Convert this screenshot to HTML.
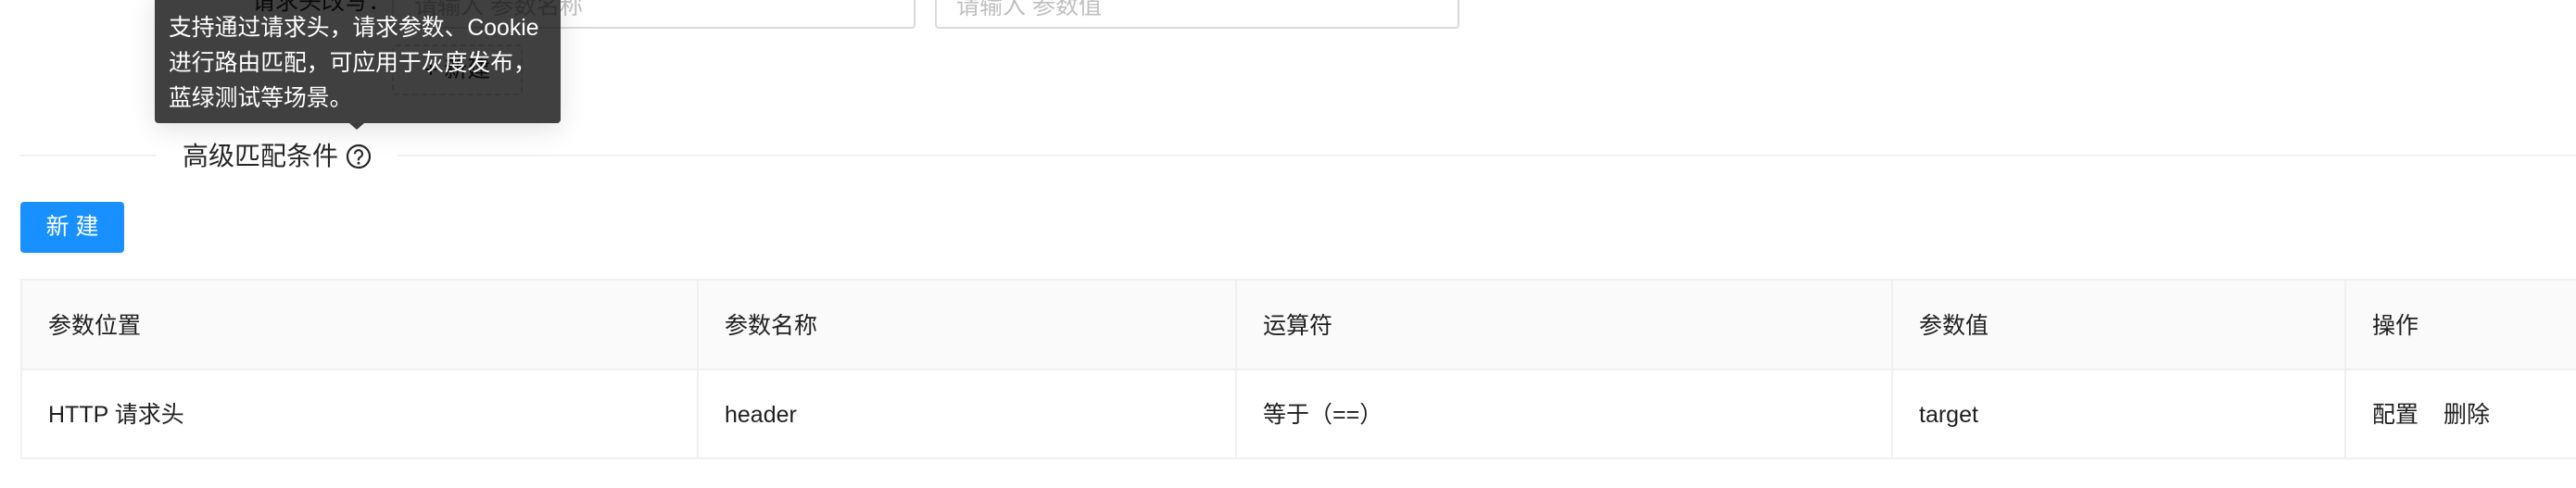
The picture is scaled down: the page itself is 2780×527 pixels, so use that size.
<!DOCTYPE html>
<html><head><meta charset="utf-8"><style>
*{margin:0;padding:0;box-sizing:border-box}
body{width:2780px;height:527px;background:#fff;position:relative;overflow:hidden;font-family:"Liberation Sans","Noto Sans CJK SC",sans-serif;color:rgba(0,0,0,.85);font-size:25px}
.a{position:absolute;white-space:nowrap}
.inp{position:absolute;border:2px solid #d9d9d9;border-radius:4px;top:-30px;height:61px;color:#bfbfbf}
.cell{position:absolute;line-height:30px;color:rgba(0,0,0,.88)}
</style></head><body>
<div class="a" style="left:272px;top:-13px;line-height:30px">请求头改写：</div>
<div class="inp" style="left:423px;width:565px"><span class="a" style="left:22px;top:20px;line-height:30px">请输入 参数名称</span></div>
<div class="inp" style="left:1009px;width:566px"><span class="a" style="left:21px;top:20px;line-height:30px">请输入 参数值</span></div>
<div class="a" style="left:423px;top:48px;width:141px;height:55px;border:2px dashed #d9d9d9;border-radius:4px;text-align:center;line-height:51px">+ 新建</div>

<div class="a" style="left:21px;top:167px;width:147px;height:2px;background:#f0f0f0"></div>
<div class="a" style="left:429px;top:167px;width:2351px;height:2px;background:#f0f0f0"></div>
<div class="a" style="left:197px;top:151px;font-size:28px;line-height:36px">高级匹配条件</div>
<svg class="a" style="left:373px;top:155px" width="28" height="28" viewBox="0 0 28 28"><circle cx="14" cy="14" r="12" fill="none" stroke="#262626" stroke-width="2.2"/><path d="M10 11.2a4 4 0 1 1 5.6 3.6c-1.2.6-1.6 1.3-1.6 2.6v.8" fill="none" stroke="#262626" stroke-width="2.2"/><circle cx="14" cy="21.2" r="1.4" fill="#262626"/></svg>

<div class="a" style="left:167px;top:-10px;width:438px;height:143px;background:rgba(0,0,0,.75);border-radius:4px;box-shadow:0 6px 30px rgba(0,0,0,.12);color:#fff;padding:22px 0 0 15px;font-size:24.8px;line-height:38px;white-space:normal">支持通过请求头，请求参数、Cookie<br>进行路由匹配，可应用于灰度发布，<br>蓝绿测试等场景。</div>
<div class="a" style="left:377px;top:133px;width:0;height:0;border-left:8px solid transparent;border-right:8px solid transparent;border-top:7px solid rgba(0,0,0,.75)"></div>

<div class="a" style="left:22px;top:218px;width:112px;height:55px;background:#1890ff;border-radius:4px;color:#fff;text-align:center;line-height:55px;box-shadow:0 2px 0 rgba(0,0,0,.045)">新 建</div>

<div class="a" style="left:22px;top:301px;width:2780px;height:195px;border:2px solid #f0f0f0;border-right:none"></div>
<div class="a" style="left:24px;top:303px;width:2760px;height:96px;background:#fafafa"></div>
<div class="a" style="left:22px;top:398px;width:2760px;height:2px;background:#f0f0f0"></div>
<div class="a" style="left:752px;top:303px;width:2px;height:192px;background:#f0f0f0"></div>
<div class="a" style="left:1333px;top:303px;width:2px;height:192px;background:#f0f0f0"></div>
<div class="a" style="left:2041px;top:303px;width:2px;height:192px;background:#f0f0f0"></div>
<div class="a" style="left:2530px;top:303px;width:2px;height:192px;background:#f0f0f0"></div>

<div class="cell a" style="left:52px;top:337px">参数位置</div>
<div class="cell a" style="left:782px;top:337px">参数名称</div>
<div class="cell a" style="left:1363px;top:337px">运算符</div>
<div class="cell a" style="left:2071px;top:337px">参数值</div>
<div class="cell a" style="left:2560px;top:337px">操作</div>

<div class="cell a" style="left:52px;top:433px">HTTP 请求头</div>
<div class="cell a" style="left:782px;top:433px">header</div>
<div class="cell a" style="left:1363px;top:433px">等于（==）</div>
<div class="cell a" style="left:2071px;top:433px">target</div>
<div class="cell a" style="left:2560px;top:433px">配置</div>
<div class="cell a" style="left:2637px;top:433px">删除</div>
</body></html>
